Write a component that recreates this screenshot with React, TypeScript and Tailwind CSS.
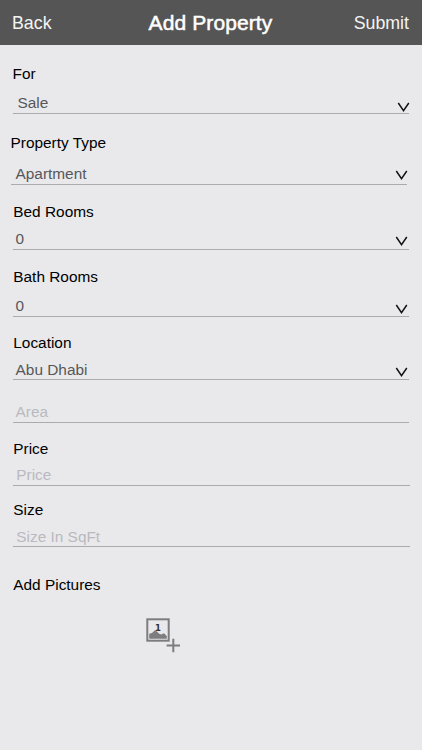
interface Field {
  id: string;
  label?: string;
  value?: string;
  placeholder?: string;
  wrapper: string;
  row: string;
  chevron?: string;
}

const fields: Field[] = [
  { id: 'for', label: 'For', value: 'Sale', wrapper: 'mt-[19px] ml-[12.5px] mr-[13px]', row: 'mt-[9px] h-[21px] pl-[5px]', chevron: 'mt-[9px] -mr-px' },
  { id: 'type', label: 'Property Type', value: 'Apartment', wrapper: 'mt-[19px] ml-[10.5px] mr-[15px]', row: 'mt-[11px] h-[21px] pl-[5px]', chevron: 'mt-[6px] -mr-px' },
  { id: 'beds', label: 'Bed Rooms', value: '0', wrapper: 'mt-[17px] ml-[13.3px] mr-[13px]', row: 'mt-[7px] h-[21px] pl-[2.3px]', chevron: 'mt-[7px] mr-px' },
  { id: 'baths', label: 'Bath Rooms', value: '0', wrapper: 'mt-[17px] ml-[13.3px] mr-[13px]', row: 'mt-[9px] h-[21px] pl-[2.3px]', chevron: 'mt-[8px] mr-px' },
  { id: 'location', label: 'Location', value: 'Abu Dhabi', wrapper: 'mt-[16px] ml-[13.3px] mr-[13px]', row: 'mt-[7px] h-[20px] pl-[2.3px]', chevron: 'mt-[7px] mr-px' },
  { id: 'area', placeholder: 'Area', wrapper: 'mt-[22px] ml-[13px] mr-[13px]', row: 'h-[21px] pl-[2.5px]' },
  { id: 'price', label: 'Price', placeholder: 'Price', wrapper: 'mt-[16px] ml-[13.3px] mr-[12px]', row: 'mt-[6px] h-[21px] pl-[3px]' },
  { id: 'size', label: 'Size', placeholder: 'Size In SqFt', wrapper: 'mt-[14px] ml-[13.3px] mr-[12px]', row: 'mt-[7px] h-[20px] pl-[3px]' },
];

function Chevron({ className }: { className: string }) {
  return (
    <svg className={`h-[10px] w-[13px] shrink-0 ${className}`} viewBox="0 0 13 10" fill="none">
      <path d="M1.3 1 6.5 8.6 11.8 1" stroke="#111" strokeWidth="1.5" />
    </svg>
  );
}

function FormField({ field }: { field: Field }) {
  return (
    <div className={field.wrapper}>
      {field.label && <div className="h-5 leading-5 text-black">{field.label}</div>}
      <div className={`flex items-start justify-between border-b border-[#ababad] ${field.row}`}>
        {field.value ? (
          <span className="leading-5 text-[#57575a]">{field.value}</span>
        ) : (
          <span className="leading-5 text-[#b9b9bf]">{field.placeholder}</span>
        )}
        {field.chevron && <Chevron className={field.chevron} />}
      </div>
    </div>
  );
}

function AddPictureIcon() {
  return (
    <svg className="h-9 w-9" viewBox="0 0 36 36" fill="none">
      <rect x="2.3" y="2.3" width="21.4" height="21.4" stroke="#7d7d7f" strokeWidth="2" />
      <path d="M4.2 21.7v-5l2.8-.8 3.2-2.8 4 3.6 2.2.8 2.6-1.2 2.8 2.6v2.8z" fill="#7d7d7f" />
      <text x="12.9" y="13.6" textAnchor="middle" fontSize="8.5" fontWeight="bold" fontFamily="DejaVu Sans" fill="#333">
        1
      </text>
      <path d="M28.3 21.8v13.4M21.6 28.5h13.4" stroke="#7d7d7f" strokeWidth="2" />
    </svg>
  );
}

export default function App() {
  return (
    <div className="flex h-[750px] w-[422px] flex-col overflow-hidden bg-[#e9e9eb] font-['Liberation_Sans',Arial,sans-serif] text-[15.4px]">
      <header className="grid h-[45px] shrink-0 grid-cols-[1fr_auto_1fr] items-center bg-[#555] pr-[13px] pl-3 text-[17.8px] text-[#f4f4f4]">
        <button className="pt-0.5 text-left">Back</button>
        <h1 className="text-[21px] tracking-[0.1px] text-white [-webkit-text-stroke:0.5px_white]">Add Property</h1>
        <button className="pt-0.5 text-right">Submit</button>
      </header>
      <main>
        {fields.map(field => (
          <FormField key={field.id} field={field} />
        ))}
        <section className="mt-[28px] ml-[13.3px]">
          <h2 className="h-5 leading-5 text-black">Add Pictures</h2>
          <button className="mt-[22px] ml-[131.7px] block">
            <AddPictureIcon />
          </button>
        </section>
      </main>
    </div>
  );
}
